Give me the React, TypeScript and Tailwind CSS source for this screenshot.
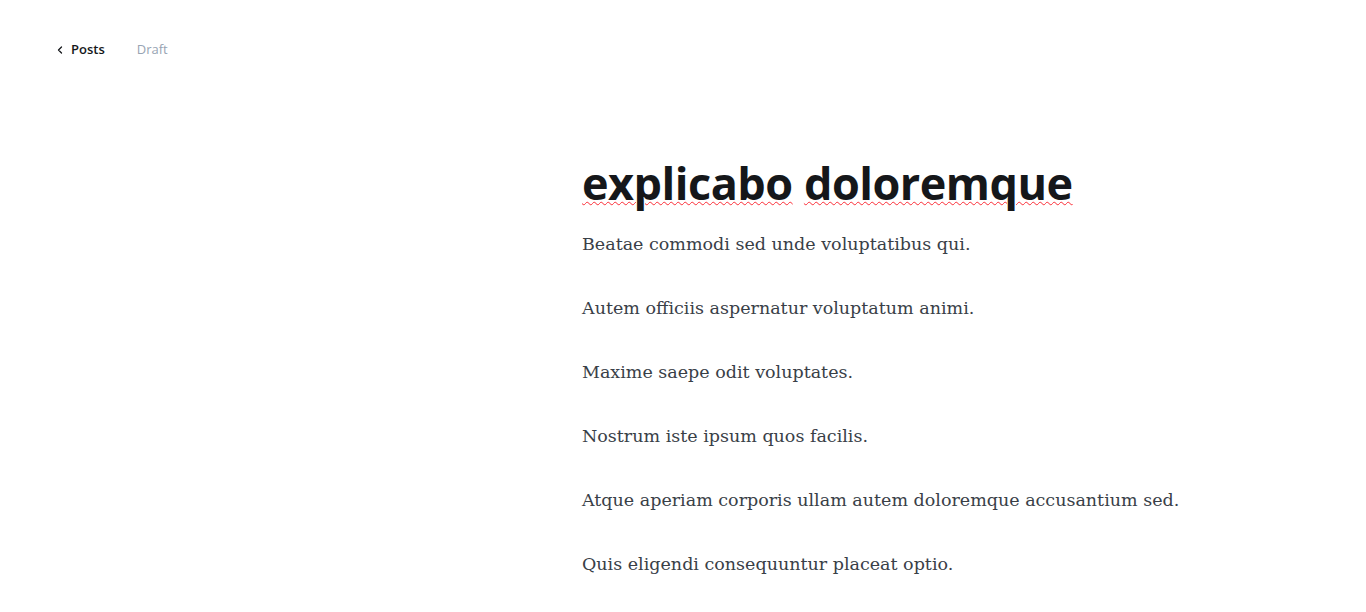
import React from "react";

const paras = [
  "Beatae commodi sed unde voluptatibus qui.",
  "Autem officiis aspernatur voluptatum animi.",
  "Maxime saepe odit voluptates.",
  "Nostrum iste ipsum quos facilis.",
  "Atque aperiam corporis ullam autem doloremque accusantium sed.",
  "Quis eligendi consequuntur placeat optio.",
];

export default function App() {
  return (
    <div className="h-[612px] w-full overflow-hidden bg-white" style={{ fontFamily: '"Open Sans", "Noto Sans", sans-serif' }}>
      <header className="flex items-center h-[40px] mt-[30px] pl-[55px]">
        <div className="flex items-center gap-[6px] text-[#15171a]">
          <svg width="10" height="10" viewBox="0 0 10 10" fill="none" stroke="#15171a" strokeWidth="1.3" strokeLinecap="round" strokeLinejoin="round">
            <path d="M6.5 2 L3.5 5 L6.5 8" />
          </svg>
          <span className="text-[13px] font-semibold">Posts</span>
        </div>
        <span className="ml-[32px] text-[13px] text-[#98a4b3]">Draft</span>
      </header>
      <main className="pl-[582px] pt-[88px]">
        <h1 className="text-[45px] font-bold leading-[1.1] tracking-[-0.5px] text-[#15171a]">
          <span className="underline decoration-wavy decoration-red-500 decoration-1 underline-offset-[1px]">explicabo</span>{" "}
          <span className="underline decoration-wavy decoration-red-500 decoration-1 underline-offset-[1px]">doloremque</span>
        </h1>
        <div className="mt-[20px] flex flex-col gap-[32px]" style={{ fontFamily: '"DejaVu Serif", Georgia, serif' }}>
          {paras.map((p) => (
            <p key={p} className="text-[17.5px] leading-[32px] text-[#394047]">{p}</p>
          ))}
        </div>
      </main>
    </div>
  );
}
